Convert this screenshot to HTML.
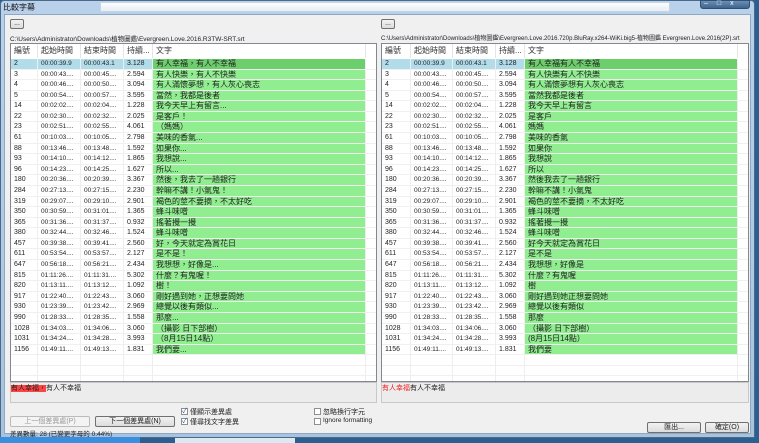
<!DOCTYPE html>
<html><head><meta charset="utf-8"><style>
*{margin:0;padding:0;box-sizing:border-box}
body{width:759px;height:443px;overflow:hidden;position:relative;background:#2b5f8f;font-family:"Liberation Sans","Noto Sans CJK TC",sans-serif;font-size:7.5px;color:#222}
.a{position:absolute}
.frame{left:0;top:0;width:755px;height:438px;background:linear-gradient(#b9d1ea,#a9c3df);border:1px solid #4a6a8a;border-radius:4px 4px 0 0}
.inner{left:4px;top:14px;width:747px;height:420px;background:#f0f0f0;border:1px solid #8ea7c2}
.tbl{background:#fff;border:1px solid #828790;overflow:hidden}
.hd{position:absolute;top:0;height:14px;line-height:14px;font-size:8px;color:#333;border-right:1px solid #e5e5e5;padding-left:3px;white-space:nowrap;overflow:hidden;background:#fff}
.c{position:absolute;height:10.6px;line-height:10.6px;white-space:nowrap;overflow:hidden;padding-left:3px;border-right:1px solid #eee;border-bottom:1px solid #f0f0f0;font-size:7px}
.g{background:#90ee90;font-size:8px;color:#222}
.btn{position:absolute;border:1px solid #707070;border-radius:2px;background:linear-gradient(#f2f2f2,#dcdcdc);text-align:center;font-size:7px;line-height:10px}
.cb{position:absolute;width:7px;height:7px;border:1px solid #8f8f8f;background:#fff;font-size:7px;line-height:6px;color:#2a4a9a;text-align:center}
</style></head><body>
<div class="a frame"></div>
<div class="a" style="left:3px;top:2px;font-size:8px;color:#111">比較字幕</div>
<div class="a" style="left:100px;top:2px;width:570px;height:10px;background:linear-gradient(#fdfdfd,#e6eef7);border:1px solid #c6d4e4"></div>
<div class="a" style="left:700px;top:0;width:50px;height:9px;background:linear-gradient(#6b8fb5,#3c6590);border:1px solid #30506e;border-radius:0 0 3px 3px"></div>
<div class="a" style="left:704px;top:0;font-size:7px;color:#fff;letter-spacing:9px">–□x</div>
<div class="a inner"></div>
<div class="btn" style="left:10px;top:19px;width:14px;height:10px;line-height:7px">...</div>
<div class="btn" style="left:381px;top:19px;width:14px;height:10px;line-height:7px">...</div>
<div class="a" style="left:10px;top:33px;font-size:6.5px;white-space:nowrap">C:\Users\Administrator\Downloads\植物圖鑑\Evergreen.Love.2016.R3TW-SRT.srt</div>
<div class="a" style="left:381px;top:33px;font-size:6px;white-space:nowrap">C:\Users\Administrator\Downloads\植物圖鑑\Evergreen.Love.2016.720p.BluRay.x264-WiKi.big5-植物圖鑑 Evergreen.Love.2016(2P).srt</div>
<div id="L" class="a tbl" style="left:10px;top:43px;width:367px;height:339px"></div>
<div id="R" class="a tbl" style="left:381px;top:43px;width:368px;height:339px"></div>
<div class="a" style="left:10px;top:382px;width:367px;height:21px;background:#ececec;border:1px solid #c8c8c8"><span style="background:#f44;color:#222;font-size:7px">有人幸福，</span><span style="font-size:7px">有人不幸福</span></div>
<div class="a" style="left:381px;top:382px;width:368px;height:21px;background:#ececec;border:1px solid #c8c8c8;font-size:7px"><span style="color:#e22">有人幸福</span>有人不幸福</div>
<div class="btn" style="left:10px;top:416px;width:80px;height:11px;color:#999;border-color:#bbb;background:#f4f4f4">上一個差異處(P)</div>
<div class="btn" style="left:95px;top:416px;width:80px;height:11px">下一個差異處(N)</div>
<div class="cb" style="left:181px;top:408px">✓</div><div class="a" style="left:190px;top:407px;font-size:7px">僅顯示差異處</div>
<div class="cb" style="left:181px;top:418px">✓</div><div class="a" style="left:190px;top:417px;font-size:7px">僅尋找文字差異</div>
<div class="cb" style="left:314px;top:408px"></div><div class="a" style="left:323px;top:407px;font-size:7px">忽略換行字元</div>
<div class="cb" style="left:314px;top:418px"></div><div class="a" style="left:323px;top:417px;font-size:6.5px">Ignore formatting</div>
<div class="a" style="left:10px;top:428px;font-size:6.5px;white-space:nowrap">差異數量: 28 (已變更字母的 0.44%)</div>
<div class="btn" style="left:647px;top:422px;width:54px;height:11px">匯出...</div>
<div class="btn" style="left:705px;top:422px;width:44px;height:11px">確定(O)</div>
<div class="a" style="left:0;top:437px;width:140px;height:6px;background:#3a8ee0"></div>
<div class="a" style="left:175px;top:438px;width:120px;height:5px;background:#dce8f2"></div>
<script>
var n=[2,3,4,5,14,22,23,61,88,93,96,180,284,319,350,365,380,457,611,647,815,820,917,930,990,1028,1031,1156];
var s=["00:00:39.9","00:00:43","00:00:46","00:00:54","00:02:02","00:02:30","00:02:51","00:10:03","00:13:46","00:14:10","00:14:23","00:20:36","00:27:13","00:29:07","00:30:59","00:31:36","00:32:44","00:39:38","00:53:54","00:56:18","01:11:26","01:13:11","01:22:40","01:23:39","01:28:33","01:34:03","01:34:24","01:49:11"];
var e=["00:00:43.1","00:00:45","00:00:50","00:00:57","00:02:04","00:02:32","00:02:55","00:10:05","00:13:48","00:14:12","00:14:25","00:20:39","00:27:15","00:29:10","00:31:01","00:31:37","00:32:46","00:39:41","00:53:57","00:56:21","01:11:31","01:13:12","01:22:43","01:23:42","01:28:35","01:34:06","01:34:28","01:49:13"];
var d=["3.128","2.594","3.094","3.595","1.228","2.025","4.061","2.798","1.592","1.865","1.627","3.367","2.230","2.901","1.365","0.932","1.524","2.560","2.127","2.434","5.302","1.092","3.060","2.969","1.558","3.060","3.993","1.831"];
var tl=["有人幸福，有人不幸福","有人快樂，有人不快樂","有人滿懷夢想，有人灰心喪志","當然，我都是後者","我今天早上有留言...","是客戶！","（媽媽）","美味的香氣...","如果你...","我想說...","所以...","然後，我去了一趟銀行","幹嘛不講！小氣鬼！","褐色的莖不要摘，不太好吃","蜂斗味噌","搖著攪一攪","蜂斗味噌","好，今天就定為賞花日","是不是！","我想想，好像是...","什麼？有鬼喔！","樹！","剛好遇到她，正想要問她","總覺以後有類似...","那麼...","（攝影 日下部樹）","（8月15日14點）","我們要..."];
var tr=["有人幸福有人不幸福","有人快樂有人不快樂","有人滿懷夢想有人灰心喪志","當然我都是後者","我今天早上有留言","是客戶","媽媽","美味的香氣","如果你","我想說","所以","然後我去了一趟銀行","幹嘛不講！小氣鬼","褐色的莖不要摘，不太好吃","蜂斗味噌","搖著攪一攪","蜂斗味噌","好今天就定為賞花日","是不是","我想想，好像是","什麼？有鬼喔","樹","剛好遇到她正想要問她","總覺以後有類似","那麼","（攝影 日下部樹）","(8月15日14點）","我們要"];
function build(id,cols,txt){var el=document.getElementById(id),h="";var hs=["編號","起始時間","結束時間","持續...","文字",""];
for(var j=0;j<6;j++)h+='<div class="hd" style="left:'+cols[j]+'px;width:'+(cols[j+1]-cols[j])+'px">'+hs[j]+'</div>';
for(var r=0;r<31;r++){var t=15+r*10.58;for(var j=0;j<6;j++){var v="",cls="c",st="";
if(r<28){v=[n[r],r?s[r]+"....":s[r],r?e[r]+"....":e[r],d[r],txt[r],""][j];if(j==4)cls+=" g";if(r==0){st=j==4?"background:#6ccf6c;":(j<4?"background:#b2dcea;":"");}}
if(j==1||j==2){st+="font-size:6.5px;"}
h+='<div class="'+cls+'" style="top:'+t+'px;left:'+cols[j]+'px;width:'+(cols[j+1]-cols[j])+'px;'+st+'">'+v+'</div>';}}
el.innerHTML=h;}
build("L",[0,27,70,113,142,355,367],tl);
build("R",[0,29,71,114,143,356,368],tr);
</script>
</body></html>
